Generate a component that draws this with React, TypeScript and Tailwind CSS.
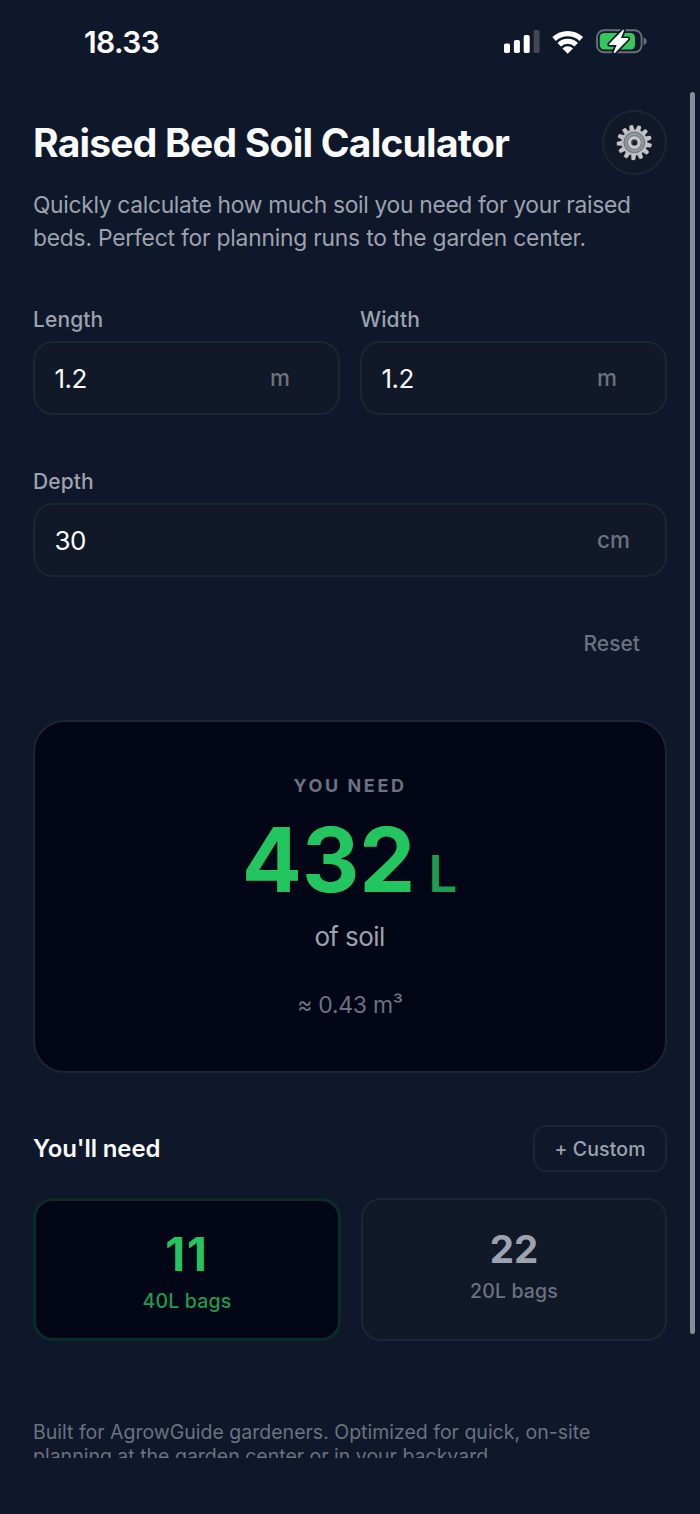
import { useState } from 'react';

interface FieldProps {
  label: string;
  unit: string;
  value: string;
  unitClass: string;
  onChange: (value: string) => void;
}

const GEAR_TEETH = Array.from({ length: 13 }, (_, i) => (i * 360) / 13 - 10.5);

// ── Status bar icons ──────────────────────────────────────────────────────────
function SignalIcon() {
  return (
    <svg width="36" height="24" viewBox="0 0 36 24" fill="#fff">
      <rect x="0" y="13.5" width="6" height="9.4" rx="1.6" />
      <rect x="9.9" y="10.1" width="6" height="12.8" rx="1.6" />
      <rect x="19.7" y="5.1" width="6" height="17.8" rx="1.6" />
      <rect x="29.6" y="0.1" width="6" height="22.8" rx="1.6" fill="#424858" />
    </svg>
  );
}

function WifiIcon() {
  return (
    <svg width="32" height="25" viewBox="0 0 32 25" fill="none" stroke="#fff">
      <path d="M2.1 9A20 20 0 0 1 29.3 9" strokeWidth="5.2" />
      <path d="M7.2 14.7A12.3 12.3 0 0 1 24.2 14.7" strokeWidth="5" />
      <path d="M15.7 23.8L10.4 18.5A7.6 7.6 0 0 1 21 18.5Z" fill="#fff" stroke="none" />
    </svg>
  );
}

function BatteryIcon() {
  return (
    <svg width="52" height="28" viewBox="0 0 52 28">
      <rect x="1" y="2.3" width="44.6" height="22" rx="7" fill="none" stroke="#686e7b" strokeWidth="1.9" />
      <path d="M47.6 9.5C49.6 10.2 50.6 11.6 50.6 13.3S49.6 16.4 47.6 17.1Z" fill="#686e7b" />
      <rect x="3.7" y="5" width="35.3" height="16.6" rx="4.6" fill="#34c759" />
      <path
        d="M26.5 2.2L13.3 15.8C12.8 16.5 13.1 17 13.8 17H20.6L17.7 24.2C17.5 25.2 18.5 25.4 19.2 24.7L32.1 11.4C32.7 10.7 32.4 10.1 31.6 10.1H25L27.9 3C28.1 2 27.2 1.5 26.5 2.2Z"
        fill="#fff"
        stroke="#0f172a"
        strokeWidth="3.4"
        paintOrder="stroke"
      />
    </svg>
  );
}

function GearIcon() {
  return (
    <svg width="38" height="38" viewBox="-18.4 -18.5 38 38">
      <defs>
        <linearGradient id="gear" x1="0" y1="0" x2="1" y2="1">
          <stop offset="0" stopColor="#b2b5ba" />
          <stop offset="1" stopColor="#c6c7ca" />
        </linearGradient>
      </defs>
      {GEAR_TEETH.map((angle) => (
        <path key={`s${angle}`} d="M-2.6 -12L-1.8 -17.4H1.8L2.6 -12Z" fill="#5b4a45" transform={`translate(-.6 .5) rotate(${angle})`} />
      ))}
      {GEAR_TEETH.map((angle) => (
        <path key={angle} d="M-2.4 -12L-1.8 -16.9Q-1.6 -17.5 -1 -17.5H1Q1.6 -17.5 1.8 -16.9L2.4 -12Z" fill="#c3c5c9" transform={`rotate(${angle})`} />
      ))}
      <circle r="12.9" fill="url(#gear)" />
      <circle r="10.6" fill="#8b8f93" />
      <circle r="10.4" fill="none" stroke="#6f7377" strokeWidth=".9" />
      <circle r="8.4" fill="none" stroke="#a0a3a7" strokeWidth=".9" />
      <circle r="7" fill="none" stroke="#74787c" strokeWidth=".8" />
      <circle r="6.3" fill="#c6c9cd" />
      <circle r="3.2" fill="#3a3d43" />
      <circle cx=".3" cy=".5" r="2" fill="#131a29" />
    </svg>
  );
}

function Field({ label, unit, value, unitClass, onChange }: FieldProps) {
  return (
    <label className="flex min-w-0 flex-1 flex-col gap-[7px]">
      <span className="text-[21px] font-medium leading-7 tracking-[0.1px] text-[#9ca3af]">{label}</span>
      <span className="flex h-[74px] items-center rounded-[20px] border-2 border-[#1b2533] bg-[#111827] pl-[19.5px]">
        <input
          className="min-w-0 flex-1 bg-transparent text-[26px] tracking-[-0.5px] text-[#f9fafb] outline-none"
          value={value}
          onChange={(e) => onChange(e.target.value)}
        />
        <span className={`text-[22.5px] font-medium text-[#6b7280] ${unitClass}`}>{unit}</span>
      </span>
    </label>
  );
}

export default function App() {
  const [length, setLength] = useState('1.2');
  const [width, setWidth] = useState('1.2');
  const [depth, setDepth] = useState('30');

  // m * m * cm -> litres
  const litres = (Number(length) || 0) * (Number(width) || 0) * (Number(depth) || 0) * 10;

  const reset = () => {
    setLength('1.2');
    setWidth('1.2');
    setDepth('30');
  };

  return (
    <div className="flex h-[1514px] w-[700px] flex-col overflow-hidden bg-[#0f172a] font-[Inter,sans-serif] text-[#f9fafb]">
      <div className="flex h-[84px] shrink-0 items-center pl-[84px] pr-[52px]">
        <span className="text-[30px] font-semibold leading-none tracking-[-0.6px] text-white">18.33</span>
        <div className="ml-auto flex items-center">
          <SignalIcon />
          <div className="ml-3"><WifiIcon /></div>
          <div className="ml-3"><BatteryIcon /></div>
        </div>
      </div>

      <div className="relative h-[1374px] shrink-0 overflow-hidden">
        <main className="flex flex-col px-[33px] pt-[26px]">
          <div className="flex h-[65px] items-center justify-between">
            <h1 className="whitespace-nowrap text-[39px] font-bold leading-none tracking-[-0.78px]">Raised Bed Soil Calculator</h1>
            <button className="flex size-[65px] items-center justify-center rounded-full border-2 border-[#1b2533] bg-[#111827]">
              <GearIcon />
            </button>
          </div>
          <p className="mt-[13px] whitespace-nowrap text-[22.8px] leading-[33px] text-[#9ca3af]">
            <span className="tracking-[-0.31px]">Quickly calculate how much soil you need for your raised</span>
            <br />
            <span className="tracking-[-0.21px]">beds. Perfect for planning runs to the garden center.</span>
          </p>

          <div className="mt-[52px] flex gap-5">
            <Field label="Length" unit="m" value={length} unitClass="pr-12" onChange={setLength} />
            <Field label="Width" unit="m" value={width} unitClass="pr-12" onChange={setWidth} />
          </div>
          <div className="mt-[53px] flex">
            <Field label="Depth" unit="cm" value={depth} unitClass="pr-[35px]" onChange={setDepth} />
          </div>
          <button onClick={reset} className="mr-[27px] mt-[53px] self-end text-[21px] font-medium leading-7 text-[#6b7280]">
            Reset
          </button>

          <section className="mt-[62px] flex h-[353px] flex-col items-center rounded-[32px] border-2 border-[#1b2533] bg-[#020617] pt-[52px]">
            <div className="text-[18px] font-bold leading-6 tracking-[2.6px] text-[#6b7280]">YOU NEED</div>
            <div className="mt-[14px] flex h-[96px] items-baseline whitespace-nowrap pr-px leading-[96px]">
              <span className="text-[89px] font-bold text-[#22c55e]">{Math.round(litres)}</span>
              <span className="ml-[13px] text-[51px] font-semibold text-[#22c55e]/80">L</span>
            </div>
            <div className="mt-[13px] pr-px text-[26px] leading-8 tracking-[-0.6px] text-[#9ca3af]">of soil</div>
            <div className="mt-[38px] text-[23px] leading-7 tracking-[-0.3px] text-[#6b7280]">≈ {(litres / 1000).toFixed(2)} m³</div>
          </section>

          <div className="mt-[52px] flex h-[47px] items-center justify-between">
            <h2 className="text-[24px] font-semibold leading-none tracking-[-0.1px]">You'll need</h2>
            <button className="flex h-[47px] w-[134px] items-center justify-center rounded-[13px] border-2 border-[#1b2533] pt-0.5 text-[19.5px] font-medium tracking-[0.1px] text-[#9ca3af]">
              + Custom
            </button>
          </div>

          <div className="mt-[26px] flex gap-5">
            <div className="flex h-[143px] w-[308px] flex-col items-center rounded-[20px] border-[3px] border-[#0a2c27] bg-[#020617] pt-[29px]">
              <div className="text-[46px] font-bold leading-[48px] tracking-[2px] text-[#22c55e]">{Math.ceil(litres / 40)}</div>
              <div className="mt-[11px] text-[19.5px] font-medium leading-6 tracking-[0.2px] text-[#22c55e]/80">40L bags</div>
            </div>
            <div className="flex h-[143px] flex-1 flex-col items-center rounded-[20px] border-2 border-[#1b2533] bg-[#111827] pt-[28px]">
              <div className="text-[38.5px] font-bold leading-[42px] text-[#9ca3af]">{Math.ceil(litres / 20)}</div>
              <div className="mt-[9px] text-[19.5px] font-medium leading-6 tracking-[0.15px] text-[#6b7280]">20L bags</div>
            </div>
          </div>

          <footer className="mt-[79px] whitespace-nowrap text-[19.5px] leading-[24.4px] text-[#6b7280]">
            Built for AgrowGuide gardeners. Optimized for quick, on-site
            <br />
            planning at the garden center or in your backyard.
          </footer>
        </main>

        {/* scroll indicator */}
        <div className="absolute right-[5px] top-2 h-[1242px] w-[5px] rounded-full bg-[#878b94]" />
      </div>
    </div>
  );
}
